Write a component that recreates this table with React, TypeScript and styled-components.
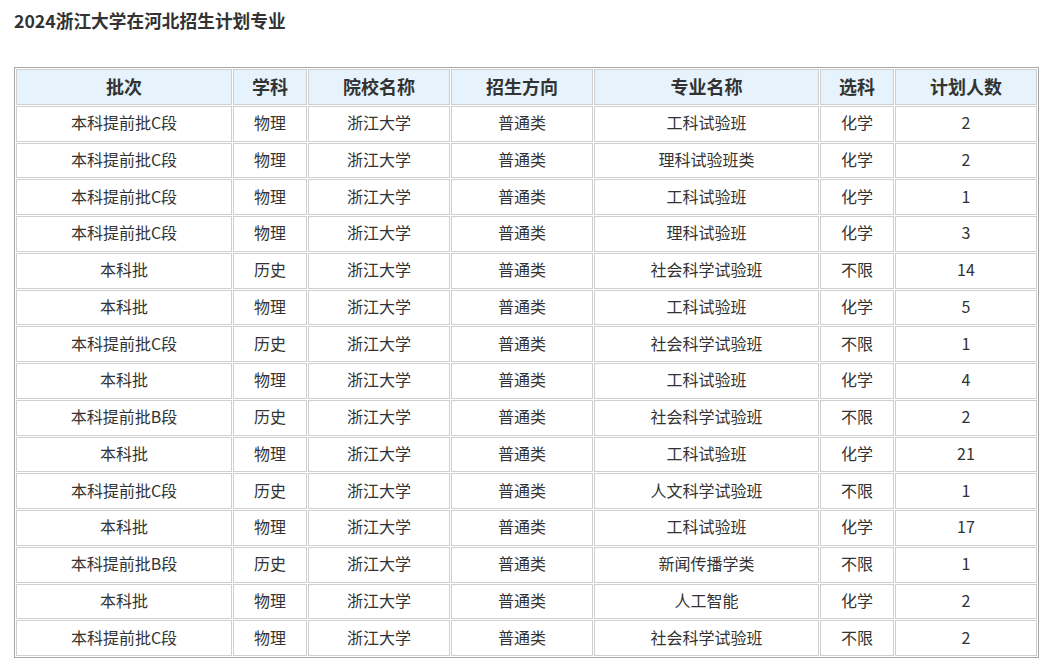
import React from "react";
import styled, { createGlobalStyle } from "styled-components";

const Global = createGlobalStyle`
  html, body { margin: 0; padding: 0; background: #fff; }
  body { font-family: "Microsoft YaHei", "Noto Sans CJK SC", "Noto Sans", sans-serif; color: #333; }
`;

const Page = styled.div`
  padding: 8px 14px 0 14px;
`;

const Title = styled.h3`
  margin: 0;
  font-size: 17.7px;
  font-weight: bold;
  line-height: 24px;
  color: #333;
`;

const Table = styled.table`
  margin-top: 35px;
  width: 1025px;
  border: 1px solid #a8a8a8;
  border-spacing: 1px;
  table-layout: fixed;
`;

const Th = styled.th`
  box-sizing: border-box;
  height: 35.75px;
  padding: 0 0 2px 0;
  background: #e6f3fc;
  border: 1px solid #cfcfcf;
  font-size: 18px;
  font-weight: bold;
  color: #333;
  text-align: center;
  vertical-align: middle;
`;

const Td = styled.td`
  box-sizing: border-box;
  height: 35.75px;
  padding: 0 0 3px 0;
  border: 1px solid #cfcfcf;
  font-size: 16px;
  color: #333;
  text-align: center;
  vertical-align: middle;
`;

const cols = [216, 74, 142, 142, 225, 74, 142];
const headers = ["批次", "学科", "院校名称", "招生方向", "专业名称", "选科", "计划人数"];

const rows: string[][] = [
  ["本科提前批C段", "物理", "浙江大学", "普通类", "工科试验班", "化学", "2"],
  ["本科提前批C段", "物理", "浙江大学", "普通类", "理科试验班类", "化学", "2"],
  ["本科提前批C段", "物理", "浙江大学", "普通类", "工科试验班", "化学", "1"],
  ["本科提前批C段", "物理", "浙江大学", "普通类", "理科试验班", "化学", "3"],
  ["本科批", "历史", "浙江大学", "普通类", "社会科学试验班", "不限", "14"],
  ["本科批", "物理", "浙江大学", "普通类", "工科试验班", "化学", "5"],
  ["本科提前批C段", "历史", "浙江大学", "普通类", "社会科学试验班", "不限", "1"],
  ["本科批", "物理", "浙江大学", "普通类", "工科试验班", "化学", "4"],
  ["本科提前批B段", "历史", "浙江大学", "普通类", "社会科学试验班", "不限", "2"],
  ["本科批", "物理", "浙江大学", "普通类", "工科试验班", "化学", "21"],
  ["本科提前批C段", "历史", "浙江大学", "普通类", "人文科学试验班", "不限", "1"],
  ["本科批", "物理", "浙江大学", "普通类", "工科试验班", "化学", "17"],
  ["本科提前批B段", "历史", "浙江大学", "普通类", "新闻传播学类", "不限", "1"],
  ["本科批", "物理", "浙江大学", "普通类", "人工智能", "化学", "2"],
  ["本科提前批C段", "物理", "浙江大学", "普通类", "社会科学试验班", "不限", "2"],
];

export default function App() {
  return (
    <Page>
      <Global />
      <Title>2024浙江大学在河北招生计划专业</Title>
      <Table>
        <colgroup>
          {cols.map((w, i) => (
            <col key={i} style={{ width: w }} />
          ))}
        </colgroup>
        <thead>
          <tr>
            {headers.map((h) => (
              <Th key={h}>{h}</Th>
            ))}
          </tr>
        </thead>
        <tbody>
          {rows.map((r, i) => (
            <tr key={i}>
              {r.map((c, j) => (
                <Td key={j}>{c}</Td>
              ))}
            </tr>
          ))}
        </tbody>
      </Table>
    </Page>
  );
}
